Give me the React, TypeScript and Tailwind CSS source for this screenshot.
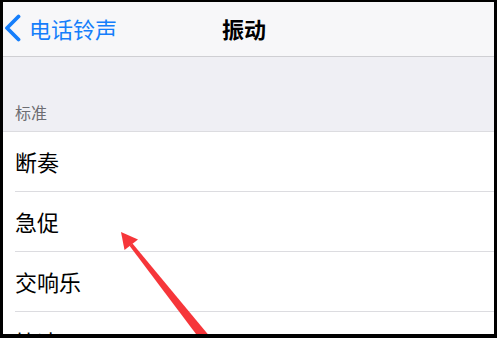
import React from "react";

const rows = ["断奏", "急促", "交响乐", "快速"];

const BackChevron = () => (
  <svg width="17" height="28" viewBox="0 0 17 28" className="shrink-0">
    <path d="M14.5 2.5 L3 14 L14.5 25.5" fill="none" stroke="#157efb" strokeWidth="3.8" strokeLinecap="round" strokeLinejoin="round" />
  </svg>
);

const RedArrow = () => (
  <svg className="absolute left-[-3px] top-[-2px] pointer-events-none" width="497" height="338" viewBox="0 0 497 338">
    <polygon points="199,338 211,338 132.5,243.5 129.5,245.8" fill="#f6363a" />
    <polygon points="121,232 138,239.5 124.5,250" fill="#f6363a" />
  </svg>
);

export default function App() {
  return (
    <div
      className="w-[497px] h-[338px] bg-black pt-[2px] pl-[3px] pr-[3px] pb-[4px]"
      style={{ fontFamily: '"Noto Sans CJK SC", "Noto Sans", sans-serif' }}
    >
      <div className="relative w-full h-full overflow-hidden bg-[#efeff4]">
        {/* nav bar */}
        <div className="relative h-[55px] bg-[#f7f7f9] border-b border-[#cfcfd3] flex items-center pl-[1px] pb-[3px]">
          <BackChevron />
          <span className="ml-[8px] text-[22px] leading-none text-[#157efb]">电话铃声</span>
          <span className="absolute left-[219px] text-[22px] leading-none font-semibold text-black">振动</span>
        </div>

        {/* section header */}
        <div className="h-[74px] flex items-end pl-[12px] pb-[11px]">
          <span className="text-[16px] leading-none text-[#6d6d72]">标准</span>
        </div>

        {/* list */}
        <div className="bg-white border-t border-[#dcdce0]">
          {rows.map((r) => (
            <div key={r} className="pl-[12px]">
              <div className="h-[60px] flex items-center pb-[2px] border-b border-[#dcdce0] text-[22px] leading-none text-black">
                {r}
              </div>
            </div>
          ))}
        </div>

        <RedArrow />
      </div>
    </div>
  );
}
